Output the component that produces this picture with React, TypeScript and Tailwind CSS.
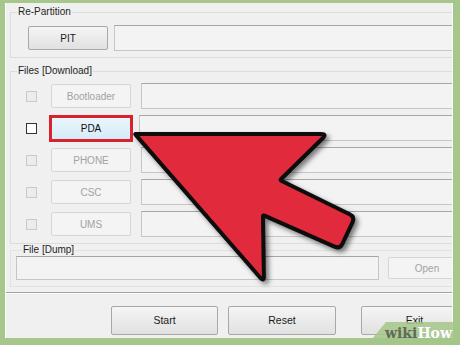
import React from "react";

type Pt = [number, number];

function roundedPath(pts: Pt[], radii: number[]) {
  let d = "";
  const n = pts.length;
  for (let i = 0; i < n; i++) {
    const p = pts[i];
    const prev = pts[(i - 1 + n) % n];
    const next = pts[(i + 1) % n];
    const r = radii[i];
    const v1x = prev[0] - p[0];
    const v1y = prev[1] - p[1];
    const v2x = next[0] - p[0];
    const v2y = next[1] - p[1];
    const l1 = Math.hypot(v1x, v1y);
    const l2 = Math.hypot(v2x, v2y);
    const ax = p[0] + (v1x / l1) * r;
    const ay = p[1] + (v1y / l1) * r;
    const bx = p[0] + (v2x / l2) * r;
    const by = p[1] + (v2y / l2) * r;
    d += `${i === 0 ? "M" : "L"}${ax.toFixed(1)},${ay.toFixed(1)} Q${p[0]},${p[1]} ${bx.toFixed(1)},${by.toFixed(1)} `;
  }
  return d + "Z";
}

const arrowPts: Pt[] = [
  [135, 134],
  [327, 134],
  [280, 180],
  [355, 217],
  [340, 249],
  [263, 215],
  [264, 282],
];
const arrowRadii = [0.5, 6, 1.5, 6, 6, 1.5, 6];

function Field({ className = "" }: { className?: string }) {
  return (
    <div
      className={
        "border border-[#c6c6c6] border-t-[#a6a6a6] bg-[#f3f3f3] " + className
      }
    />
  );
}

function DisabledBtn({ label, className = "" }: { label: string; className?: string }) {
  return (
    <div
      className={
        "flex items-center justify-center border border-[#d6d6d6] rounded-[2px] bg-[#f4f4f4] text-[10px] text-[#a2a2a2] " +
        className
      }
    >
      {label}
    </div>
  );
}

function Btn({ label, className = "" }: { label: string; className?: string }) {
  return (
    <div
      className={
        "flex items-center justify-center border border-[#a8a8a8] rounded-[2px] bg-gradient-to-b from-[#f5f5f5] to-[#e1e1e1] text-[10.5px] text-[#1a1a1a] " +
        className
      }
    >
      {label}
    </div>
  );
}

function Check({ enabled = false }: { enabled?: boolean }) {
  return enabled ? (
    <div className="w-[11px] h-[11px] border-[1.5px] border-[#333] bg-white shrink-0" />
  ) : (
    <div className="w-[11px] h-[11px] border border-[#c9c9c9] bg-[#ececec] shrink-0" />
  );
}

function Row({ label, pda = false }: { label: string; pda?: boolean }) {
  return (
    <div className="flex items-center h-[26px] pl-[15px]">
      <Check enabled={pda} />
      {pda ? (
        <div className="ml-[12px] mr-[6px] w-[84px] h-[27px] border-[3px] border-[#d8232f] bg-gradient-to-b from-[#eaf5fc] to-[#d6ebf8] flex items-center justify-center text-[10px] text-[#111] shrink-0">
          {label}
        </div>
      ) : (
        <DisabledBtn label={label} className="ml-[14px] mr-[10px] w-[80px] h-[24px] shrink-0" />
      )}
      <Field className="h-[26px] flex-1" />
    </div>
  );
}

export default function App() {
  return (
    <div className="relative w-[460px] h-[345px] bg-[#a6c68c] pt-[3px] pl-[5px] font-['Liberation_Sans',Arial,sans-serif] overflow-hidden">
      <div className="w-[448px] h-[335px] bg-[#f0f0f0] overflow-hidden flex flex-col border-l border-white border-r border-r-[#fafafa]">
        {/* Re-Partition */}
        <fieldset className="ml-[4px] mt-[3px] w-[460px] border border-[#dcdcdc]">
          <legend className="ml-[6px] px-[1px] text-[10px] leading-[12px] text-[#1e1e1e]">
            Re-Partition
          </legend>
          <div className="pl-[17px] pt-[7px] pb-[6px] flex items-center gap-[6px]">
            <Btn label="PIT" className="w-[80px] h-[24px] shrink-0 text-[10px]" />
            <Field className="h-[26px] flex-1" />
          </div>
        </fieldset>

        {/* Files [Download] */}
        <fieldset className="ml-[4px] mt-[7px] w-[460px] border border-[#dcdcdc]">
          <legend className="ml-[6px] px-[1px] text-[10px] leading-[12px] text-[#1e1e1e]">
            Files [Download]
          </legend>
          <div className="pt-[6px] pb-[6px] flex flex-col gap-[6px]">
            <Row label="Bootloader" />
            <Row label="PDA" pda />
            <Row label="PHONE" />
            <Row label="CSC" />
            <Row label="UMS" />
          </div>
        </fieldset>

        {/* File [Dump] */}
        <fieldset className="ml-[4px] w-[460px] border border-[#e2e2e2]">
          <legend className="ml-[11px] px-[1px] text-[10px] leading-[12px] text-[#1e1e1e]">
            File [Dump]
          </legend>
          <div className="pl-[5px] pb-[6px] flex items-center gap-[9px]">
            <Field className="w-[363px] h-[24px] shrink-0" />
            <DisabledBtn label="Open" className="w-[78px] h-[22px] shrink-0" />
          </div>
        </fieldset>

        <div className="mt-[5px] border-t border-[#a3a3a3] border-b border-b-white" />

        <div className="pt-[12px] pl-[105px] flex">
          <Btn label="Start" className="w-[107px] h-[29px] shrink-0" />
          <Btn label="Reset" className="ml-[10px] w-[108px] h-[29px] shrink-0" />
          <Btn label="Exit" className="ml-[25px] w-[107px] h-[29px] shrink-0" />
        </div>
      </div>

      {/* Arrow overlay */}
      <svg
        className="absolute left-0 top-0 pointer-events-none"
        width={460}
        height={345}
        viewBox="0 0 460 345"
      >
        <defs>
          <filter id="sh" x="-20%" y="-20%" width="140%" height="140%">
            <feDropShadow dx="3" dy="3" stdDeviation="2.5" floodColor="#000" floodOpacity="0.5" />
          </filter>
        </defs>
        <path
          d={roundedPath(arrowPts, arrowRadii)}
          fill="#e12b3b"
          stroke="#0a0a0a"
          strokeWidth={4}
          strokeLinejoin="round"
          filter="url(#sh)"
        />
        <polygon points="367,345 386,322 460,322 460,345" fill="#a3c58a" fillOpacity={0.85} />
      </svg>

      <div className="absolute left-[385px] top-[323px] h-[20px] leading-[20px] text-[14px] font-bold font-['DejaVu_Serif',serif] whitespace-nowrap">
        <span className="text-[#5f6b56]">wiki</span>
        <span className="text-white">How</span>
      </div>
    </div>
  );
}
